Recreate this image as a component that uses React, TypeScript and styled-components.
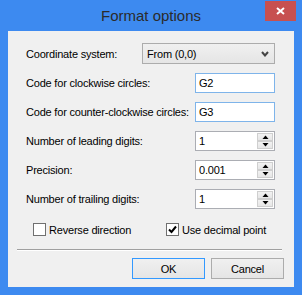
import { createGlobalStyle, styled } from "styled-components";

const GlobalStyle = createGlobalStyle`
  html, body {
    margin: 0;
    padding: 0;
    background: #ffffff;
  }
  body {
    font-family: "Liberation Sans", Arial, sans-serif;
    font-size: 11px;
    letter-spacing: -0.2px;
    color: #000000;
  }
`;

const Window = styled.div`
  width: 302px;
  height: 295px;
  box-sizing: border-box;
  background: #3d8af0;
  display: flex;
  flex-direction: column;
  padding: 0 8px 8px;
`;

const TitleBar = styled.div`
  height: 31px;
  flex: none;
  margin: 0 -8px;
  display: grid;
  grid-template-columns: 1fr auto 1fr;
`;

const Title = styled.div`
  grid-column: 2;
  font-size: 15px;
  letter-spacing: 0;
  line-height: 31px;
  color: #2b2b2b;
`;

const CloseButton = styled.div`
  grid-column: 3;
  justify-self: end;
  align-self: start;
  margin: 1px 6px 0 0;
  width: 31px;
  height: 20px;
  background: #c75050;
  display: flex;
  align-items: center;
  justify-content: center;
`;

const Client = styled.div`
  flex: 1;
  background: #f0f0f0;
  box-sizing: border-box;
  padding: 12px 19px 0 18px;
  display: flex;
  flex-direction: column;
`;

const Form = styled.div`
  display: flex;
  flex-direction: column;
  gap: 9px;
`;

const Row = styled.div`
  display: flex;
  align-items: center;
  justify-content: space-between;
`;

const Label = styled.span`
  white-space: nowrap;
`;

const Combo = styled.div`
  width: 133px;
  height: 21px;
  box-sizing: border-box;
  border: 1px solid #acacac;
  background: linear-gradient(#f0f0f0, #e5e5e5);
  display: flex;
  align-items: center;
  justify-content: space-between;
  padding: 0 5px 0 4px;
`;

const TextBox = styled.div<{ $focused?: boolean }>`
  width: 80px;
  height: 20px;
  box-sizing: border-box;
  border: 1px solid ${(p) => (p.$focused ? "#7eb4ea" : "#abadb3")};
  background: #ffffff;
  display: flex;
  align-items: center;
  padding-left: 3px;
`;

const Spinner = styled(TextBox)`
  justify-content: space-between;
  padding-right: 1px;
`;

const SpinButtons = styled.div`
  width: 16px;
  height: 16px;
  display: flex;
  flex-direction: column;
`;

const SpinButton = styled.div`
  flex: 1;
  box-sizing: border-box;
  border: 1px solid #cfcfcf;
  background: linear-gradient(#f2f2f2, #e6e6e6);
  display: flex;
  align-items: center;
  justify-content: center;
`;

const CheckRow = styled.div`
  display: grid;
  grid-template-columns: 133px auto;
  padding-left: 7px;
  margin-top: 14px;
`;

const CheckItem = styled.label`
  display: flex;
  align-items: center;
  gap: 3px;
`;

const CheckBox = styled.span`
  width: 13px;
  height: 13px;
  box-sizing: border-box;
  border: 1px solid #707070;
  background: #ffffff;
  display: flex;
  align-items: center;
  justify-content: center;
`;

const Separator = styled.div`
  height: 1px;
  margin: 13px -7px 0 -9px;
  background: #a0a0a0;
  border-bottom: 1px solid #ffffff;
`;

const Buttons = styled.div`
  display: flex;
  justify-content: flex-end;
  gap: 6px;
  margin: 7px -9px 0 0;
`;

const Button = styled.div<{ $default?: boolean }>`
  width: 73px;
  height: 21px;
  box-sizing: border-box;
  border: 1px solid ${(p) => (p.$default ? "#3399ff" : "#acacac")};
  background: linear-gradient(#f0f0f0, #e5e5e5);
  display: flex;
  align-items: center;
  justify-content: center;
`;

function Arrow({ up }: { up?: boolean }) {
  return (
    <svg width="7" height="4" viewBox="0 0 7 4">
      <path d={up ? "M0.5 4 L3.5 0.5 L6.5 4 Z" : "M0.5 0 L3.5 3.5 L6.5 0 Z"} fill="#000" />
    </svg>
  );
}

function NumberField({ value }: { value: string }) {
  return (
    <Spinner>
      <span>{value}</span>
      <SpinButtons>
        <SpinButton>
          <Arrow up />
        </SpinButton>
        <SpinButton>
          <Arrow />
        </SpinButton>
      </SpinButtons>
    </Spinner>
  );
}

export default function App() {
  return (
    <>
      <GlobalStyle />
      <Window>
        <TitleBar>
          <Title>Format options</Title>
          <CloseButton>
            <svg width="9" height="8" viewBox="0 0 9 8">
              <path d="M1 1 L8 7 M8 1 L1 7" stroke="#fff" strokeWidth="2" />
            </svg>
          </CloseButton>
        </TitleBar>
        <Client>
          <Form>
            <Row>
              <Label>Coordinate system:</Label>
              <Combo>
                <span>From (0,0)</span>
                <svg width="8" height="6" viewBox="0 0 8 6">
                  <path d="M1 1 L4 4.5 L7 1" stroke="#444" strokeWidth="2" fill="none" />
                </svg>
              </Combo>
            </Row>
            <Row>
              <Label>Code for clockwise circles:</Label>
              <TextBox $focused>G2</TextBox>
            </Row>
            <Row>
              <Label>Code for counter-clockwise circles:</Label>
              <TextBox $focused>G3</TextBox>
            </Row>
            <Row>
              <Label>Number of leading digits:</Label>
              <NumberField value="1" />
            </Row>
            <Row>
              <Label>Precision:</Label>
              <NumberField value="0.001" />
            </Row>
            <Row>
              <Label>Number of trailing digits:</Label>
              <NumberField value="1" />
            </Row>
          </Form>
          <CheckRow>
            <CheckItem>
              <CheckBox />
              Reverse direction
            </CheckItem>
            <CheckItem>
              <CheckBox>
                <svg width="9" height="9" viewBox="0 0 9 9">
                  <path d="M1 4.5 L3.5 7 L8 1.5" stroke="#000" strokeWidth="2" fill="none" />
                </svg>
              </CheckBox>
              Use decimal point
            </CheckItem>
          </CheckRow>
          <Separator />
          <Buttons>
            <Button $default>OK</Button>
            <Button>Cancel</Button>
          </Buttons>
        </Client>
      </Window>
    </>
  );
}
